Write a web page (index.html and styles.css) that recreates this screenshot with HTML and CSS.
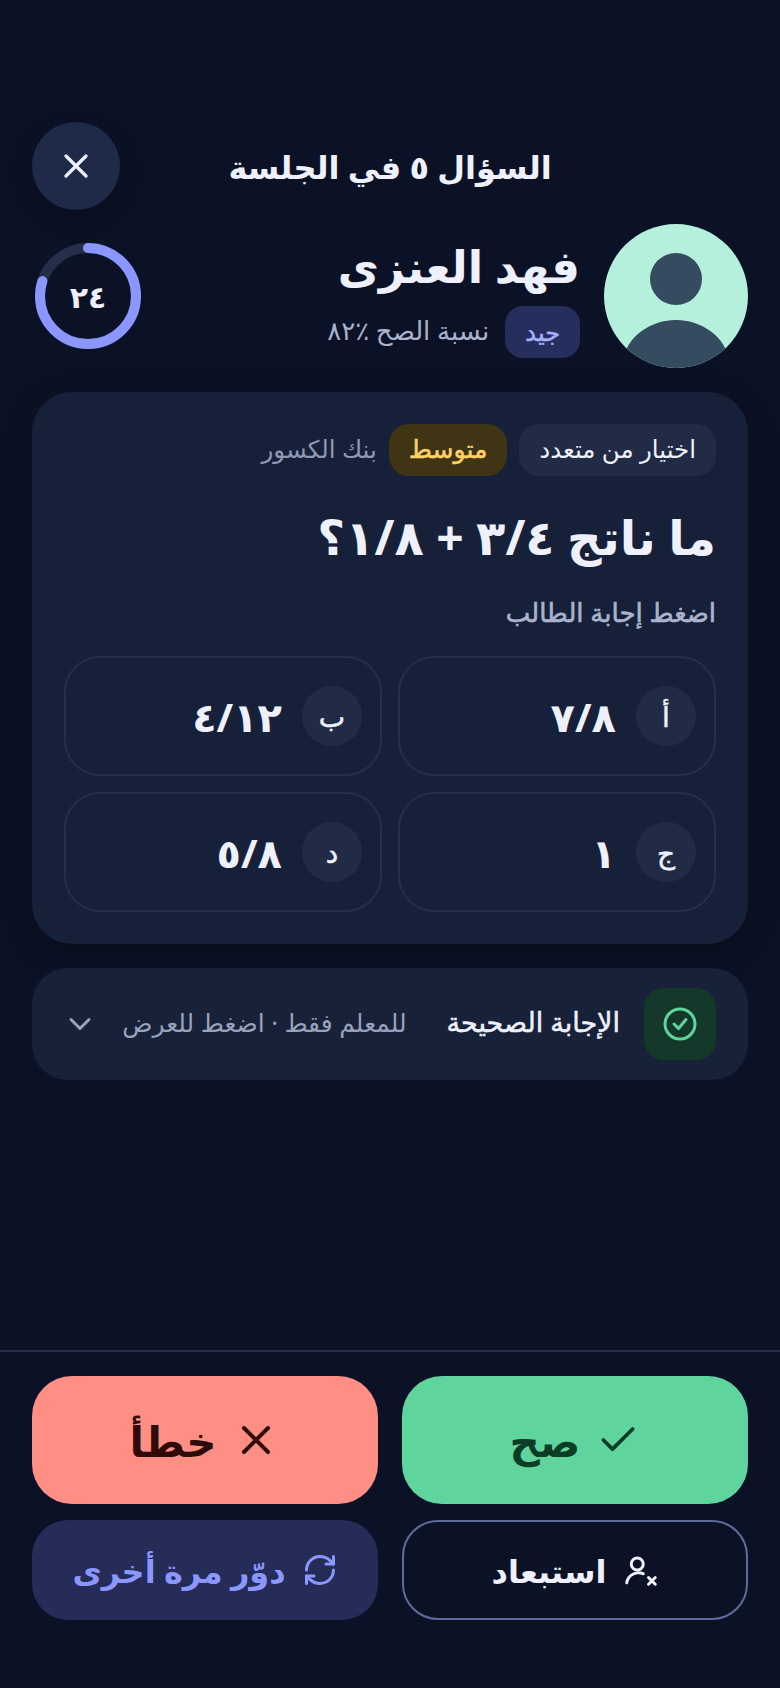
FILE: index.html
```html
<!DOCTYPE html>
<html lang="ar" dir="rtl">
<head>
  <meta charset="UTF-8" />
  <title>السؤال ٥ في الجلسة</title>
  <link rel="stylesheet" href="styles.css">
</head>
<body>
  <div class="page">
    <!-- Header -->
    <header class="topBar">
      <div class="topSpacer"></div>
      <h1 class="topTitle">السؤال ٥ في الجلسة</h1>
      <button class="closeBtn" aria-label="إغلاق">
        <svg viewBox="0 0 24 24" width="40" height="40" class="icon"><path d="M18 6 6 18M6 6l12 12"/></svg>
      </button>
    </header>

    <!-- Student -->
    <section class="student">
      <svg class="avatar" viewBox="0 0 144 144">
        <defs><clipPath id="avatarClip"><circle cx="72" cy="72" r="72"/></clipPath></defs>
        <g clip-path="url(#avatarClip)">
          <rect width="144" height="144" fill="#b5f0dc"/>
          <circle cx="72" cy="55" r="26" fill="#354b60"/>
          <ellipse cx="72" cy="144" rx="54" ry="48" fill="#354b60"/>
        </g>
      </svg>
      <div class="studentInfo">
        <div class="studentName">فهد العنزى</div>
        <div class="studentMeta">
          <span class="levelBadge">جيد</span>
          <span class="rate">نسبة الصح ٪٨٢</span>
        </div>
      </div>
      <div class="timer">
        <svg viewBox="0 0 112 112" width="112" height="112">
          <circle cx="56" cy="56" r="48" fill="none" stroke="#252f49" stroke-width="10"/>
          <circle cx="56" cy="56" r="48" fill="none" stroke="#8b97ff" stroke-width="10" stroke-linecap="round" stroke-dasharray="241 302" transform="rotate(-90 56 56)"/>
        </svg>
        <span class="timerNum">٢٤</span>
      </div>
    </section>

    <!-- Question -->
    <section class="card">
      <div class="chips">
        <span class="chip">اختيار من متعدد</span>
        <span class="chip chipMid">متوسط</span>
        <span class="bank">بنك الكسور</span>
      </div>
      <h2 class="question">ما ناتج ٣/٤ + ١/٨؟</h2>
      <p class="hint">اضغط إجابة الطالب</p>
      <div class="options">
        <div class="option"><span class="optLetter">أ</span><span class="optText">٧/٨</span></div>
        <div class="option"><span class="optLetter">ب</span><span class="optText">٤/١٢</span></div>
        <div class="option"><span class="optLetter">ج</span><span class="optText">١</span></div>
        <div class="option"><span class="optLetter">د</span><span class="optText">٥/٨</span></div>
      </div>
    </section>

    <!-- Answer reveal -->
    <section class="answerBar">
      <span class="answerIcon">
        <svg viewBox="0 0 24 24" width="36" height="36" class="icon"><circle cx="12" cy="12" r="10"/><path d="m8 12 3 3 5-6"/></svg>
      </span>
      <span class="answerTitle">الإجابة الصحيحة</span>
      <span class="answerNote">للمعلم فقط · اضغط للعرض</span>
      <svg viewBox="0 0 24 24" width="36" height="36" class="icon chevron"><path d="m6 9 6 6 6-6"/></svg>
    </section>

    <!-- Actions -->
    <footer class="actions">
      <button class="btn btnRight">
        <svg viewBox="0 0 24 24" width="44" height="44" class="icon"><path d="M20 6 9 17l-5-5"/></svg>
        صح
      </button>
      <button class="btn btnWrong">
        <svg viewBox="0 0 24 24" width="48" height="48" class="icon"><path d="M18 6 6 18M6 6l12 12"/></svg>
        خطأ
      </button>
      <button class="btn btnSmall btnOutline">
        <svg viewBox="0 0 24 24" width="36" height="36" class="icon"><circle cx="9.5" cy="8" r="4"/><path d="M2.5 20.5a8 8 0 0 1 11-6"/><path d="m17 17 4.5 4.5m0-4.5L17 21.5"/></svg>
        استبعاد
      </button>
      <button class="btn btnSmall btnRetry">
        <svg viewBox="0 0 24 24" width="36" height="36" class="icon"><path d="M3 12a9 9 0 0 1 9-9 9.75 9.75 0 0 1 6.74 2.74L21 8"/><path d="M21 3v5h-5"/><path d="M21 12a9 9 0 0 1-9 9 9.75 9.75 0 0 1-6.74-2.74L3 16"/><path d="M8 16H3v5"/></svg>
        دوّر مرة أخرى
      </button>
    </footer>
  </div>
</body>
</html>
```

FILE: styles.css
```css
* {
  box-sizing: border-box;
}

body {
  margin: 0;
  background-color: #0c1226;
  color: #eef1fb;
  font-family: "Noto Sans", "DejaVu Sans", sans-serif;
}

.page {
  display: flex;
  flex-direction: column;
  min-height: 1688px;
  padding-top: 122px;
}

.icon {
  fill: none;
  stroke: currentColor;
  stroke-width: 2;
  stroke-linecap: round;
  stroke-linejoin: round;
  flex-shrink: 0;
}

.topBar {
  display: flex;
  align-items: center;
  justify-content: space-between;
  padding: 0 32px;
}

.topSpacer {
  width: 88px;
}

.topTitle {
  margin: 0;
  font-size: 32px;
  font-weight: 700;
}

.closeBtn {
  width: 88px;
  height: 88px;
  border: none;
  border-radius: 50%;
  background-color: #1e2a47;
  color: #eef1fb;
  display: flex;
  align-items: center;
  justify-content: center;
  box-shadow: 0 8px 24px rgba(0,0,0,0.25);
}

.student {
  display: flex;
  align-items: center;
  gap: 24px;
  margin-top: 14px;
  padding: 0 32px;
}

.avatar {
  width: 144px;
  height: 144px;
  flex-shrink: 0;
}

.studentInfo {
  flex: 1;
}

.studentName {
  font-size: 45px;
  font-weight: 700;
  line-height: 64px;
  padding-bottom: 8px;
}

.studentMeta {
  display: flex;
  align-items: center;
  gap: 16px;
}

.levelBadge {
  height: 52px;
  padding: 0 20px 2px;
  border-radius: 18px;
  background-color: #262e5e;
  color: #a6b0ff;
  font-size: 24px;
  -webkit-text-stroke: 0.5px #a6b0ff;
  display: flex;
  align-items: center;
}

.rate {
  padding-bottom: 4px;
  font-size: 26px;
  color: #aab3cc;
}

.timer {
  position: relative;
  width: 112px;
  height: 112px;
  flex-shrink: 0;
}

.timer svg {
  display: block;
}

.timerNum {
  position: absolute;
  inset: 0;
  display: flex;
  align-items: center;
  justify-content: center;
  font-size: 30px;
  font-weight: 700;
}

.card {
  margin: 24px 32px 0;
  padding: 32px;
  background-color: #162038;
  border-radius: 40px;
  box-shadow: 0 8px 32px rgba(0,0,0,0.3);
}

.chips {
  display: flex;
  align-items: center;
  gap: 12px;
}

.chip {
  height: 52px;
  padding: 0 20px 4px;
  border-radius: 20px;
  background-color: #222b45;
  font-size: 24.5px;
  display: flex;
  align-items: center;
}

.chipMid {
  background-color: #3f3514;
  color: #ffd166;
  font-size: 25px;
  -webkit-text-stroke: 0.5px #ffd166;
}

.bank {
  padding-bottom: 4px;
  font-size: 24.5px;
  color: #8f99b5;
}

.question {
  margin: 25px 0 0;
  font-size: 48px;
  font-weight: 700;
  line-height: 72px;
}

.hint {
  margin: 20px 0 0;
  font-size: 26px;
  line-height: 38px;
  color: #a9b3cd;
  -webkit-text-stroke: 0.6px #a9b3cd;
}

.options {
  display: grid;
  grid-template-columns: 1fr 1fr;
  gap: 16px;
  margin-top: 25px;
}

.option {
  display: flex;
  align-items: center;
  gap: 20px;
  height: 120px;
  padding: 0 18px;
  border: 2px solid #262f4a;
  border-radius: 36px;
}

.optLetter {
  width: 60px;
  height: 60px;
  border-radius: 50%;
  background-color: #222b45;
  font-size: 28px;
  -webkit-text-stroke: 0.5px #eef1fb;
  display: flex;
  align-items: center;
  justify-content: center;
}

.optText {
  font-size: 40px;
  font-weight: 700;
}

.answerBar {
  display: flex;
  align-items: center;
  height: 112px;
  margin: 24px 32px 0;
  padding: 0 32px 0 30px;
  background-color: #172138;
  border-radius: 36px;
  white-space: nowrap;
}

.answerIcon {
  width: 72px;
  height: 72px;
  border-radius: 20px;
  background-color: #143829;
  color: #5fd49c;
  display: flex;
  align-items: center;
  justify-content: center;
}

.answerTitle {
  margin-right: 24px;
  padding-bottom: 5px;
  font-size: 27px;
  -webkit-text-stroke: 0.5px #eef1fb;
}

.answerNote {
  margin-right: 40px;
  padding-bottom: 5px;
  font-size: 25px;
  color: #98a2bd;
}

.chevron {
  margin-right: auto;
  color: #98a2bd;
}

.actions {
  display: grid;
  grid-template-columns: 1fr 1fr;
  gap: 16px 24px;
  margin-top: auto;
  padding: 24px 32px 68px;
  border-top: 2px solid #252d4b;
}

.btn {
  display: flex;
  align-items: center;
  justify-content: center;
  gap: 16px;
  height: 128px;
  border: none;
  border-radius: 40px;
  font-family: inherit;
  font-size: 42px;
  font-weight: 700;
}

.btnSmall {
  height: 100px;
  border-radius: 36px;
  font-size: 32px;
}

.btnRight {
  background-color: #5fd49c;
  color: #0c3b26;
}

.btnWrong {
  background-color: #ff8f85;
  color: #2e0a08;
}

.btnOutline {
  background: none;
  border: 2px solid #5f6c99;
  color: #eef1fb;
}

.btnRetry {
  background-color: #242c57;
  color: #8b97ff;
}
```
